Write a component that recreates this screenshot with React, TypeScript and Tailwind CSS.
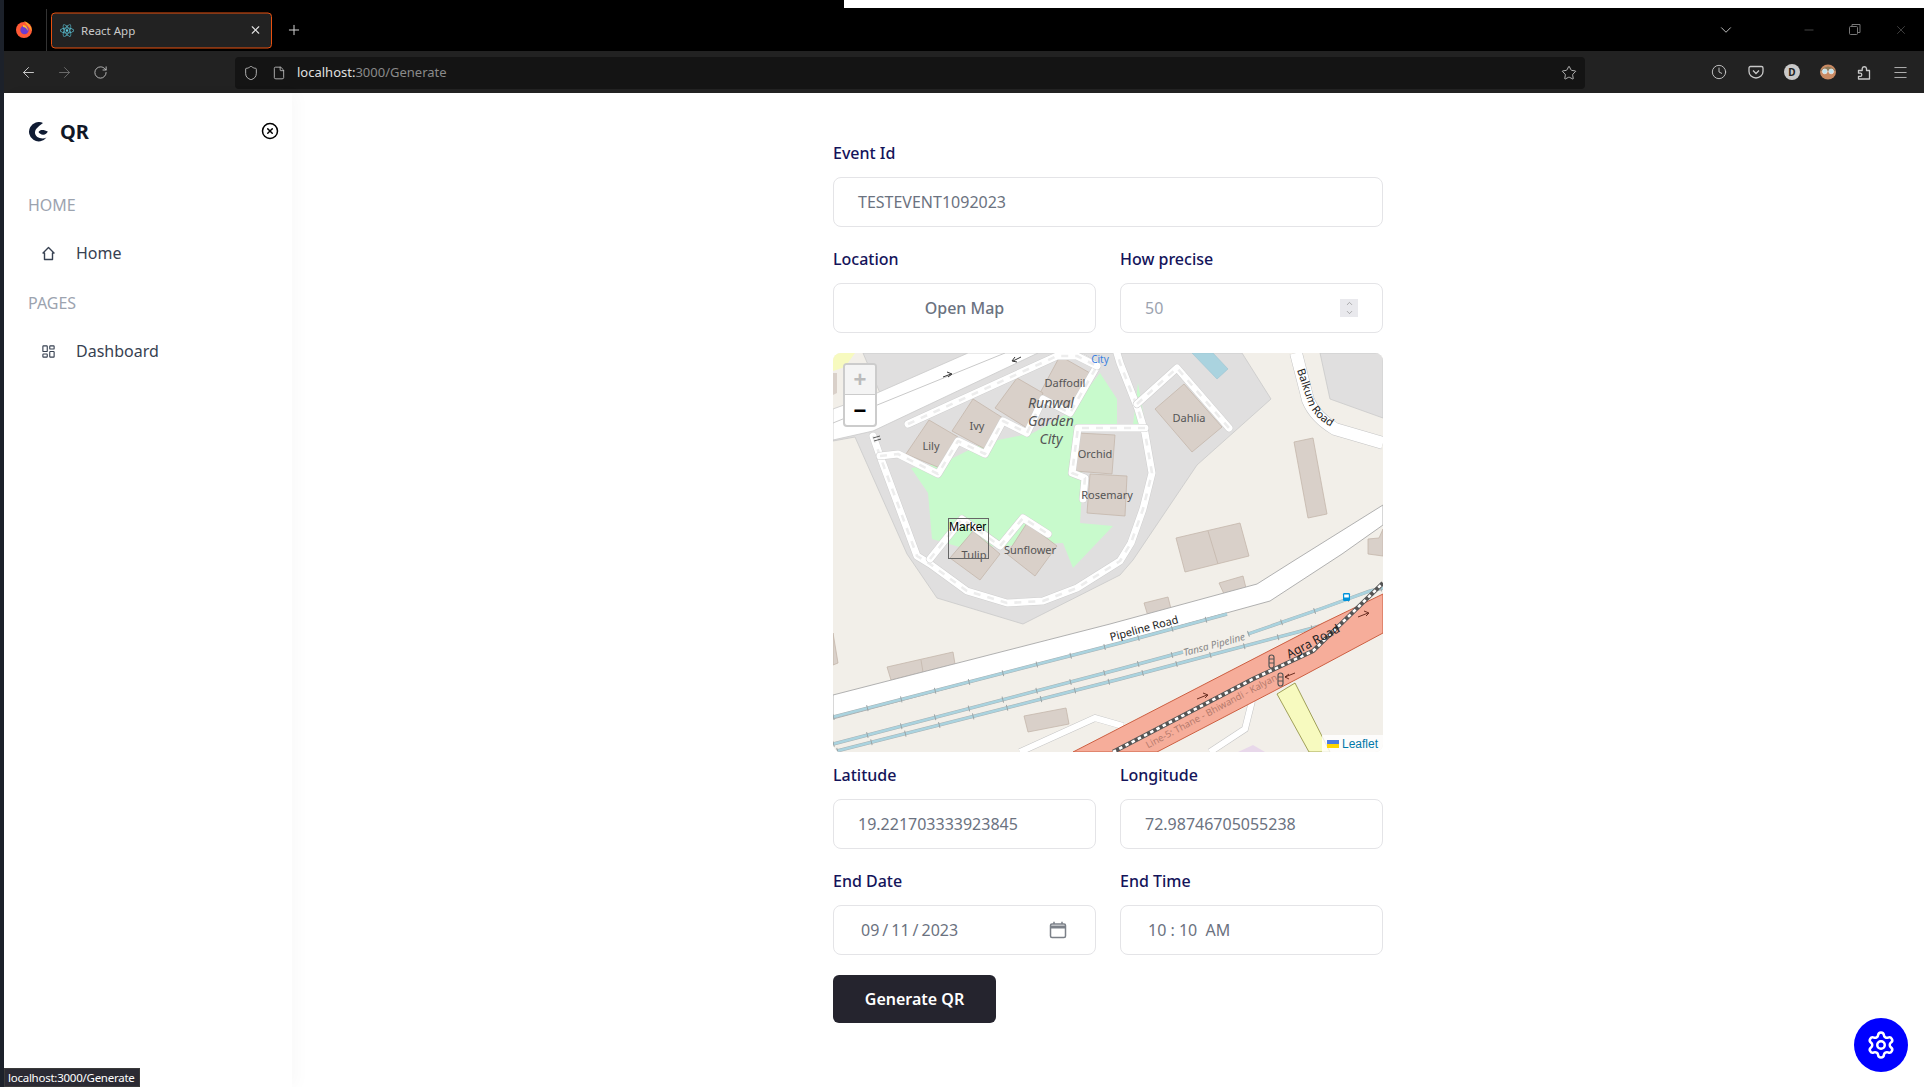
import React from "react";
import { FaReact } from "react-icons/fa";
import { ArrowLeft, ArrowRight, RotateCw, Shield, File, Star, Clock, Menu, X, Plus, ChevronDown, Minus, LayoutDashboard, Settings, CircleX, ChevronUp } from "lucide-react";

const font = { fontFamily: '"Noto Sans", sans-serif' };

function Field({ label, children, className = "" }: { label: string; children: React.ReactNode; className?: string }) {
  return (
    <div className={className}>
      <div className="text-[16px] leading-6 font-medium text-[#14145a] mb-3">{label}</div>
      {children}
    </div>
  );
}

function Box({ children, className = "" }: { children: React.ReactNode; className?: string }) {
  return (
    <div className={`h-[50px] rounded-lg border-[1.5px] border-[#e4e4e7] bg-white flex items-center text-[16px] text-[#6b7280] ${className}`}>
      {children}
    </div>
  );
}

function RoadDash({ d }: { d: string }) {
  return (
    <g fill="none" strokeLinejoin="round" strokeLinecap="round">
      <path d={d} stroke="#cfcfcf" strokeWidth={8} />
      <path d={d} stroke="#ffffff" strokeWidth={7} />
      <path d={d} stroke="#ededed" strokeWidth={2.6} strokeDasharray="7 7" strokeLinecap="butt" />
    </g>
  );
}

function Pipe({ d }: { d: string }) {
  return (
    <g fill="none">
      <path d={d} stroke="#a8b2b4" strokeWidth={3.4} />
      <path d={d} stroke="#aad3df" strokeWidth={2.4} />
      <path d={d} stroke="#9aa4a6" strokeWidth={6} strokeDasharray="1 34" />
    </g>
  );
}

function MapDrawing() {
  const bld = { fill: "#d9d0c9", stroke: "#c4b6ab", strokeWidth: 0.8 };
  const lbl = { fontFamily: '"Noto Sans", sans-serif', fontSize: 11, fill: "#555", textAnchor: "middle" as const };
  const arrow = { stroke: "#5a1f14", strokeWidth: 0.9, fill: "none" };
  return (
    <svg viewBox="0 0 550 399" width="550" height="399" className="block">
      <rect width="550" height="399" fill="#f2efe9" />
      <polygon points="8,0 22,0 12,14 0,18 0,0" fill="#f7fabf" />
      <polygon points="0,20 4,20 4,40 0,42" fill="#d9d0c9" />
      {/* residential */}
      <polygon points="22,84 74,201 104,245 190,271 287,222 300,207 364,112 438,46 409,0 30,0 47,40 0,60 0,88" fill="#e0dfdf" stroke="#c9c9c9" strokeWidth={0.8} />
      <polygon points="487,0 497,46 550,65 550,0" fill="#e0dfdf" stroke="#c9c9c9" strokeWidth={0.8} />
      <polygon points="78,115 95,140 99,186 130,195 230,190 240,215 280,173 247,170 250,125 240,72 284,71 284,46 267,20 235,60 200,80 150,90 110,110" fill="#c8facc" />
      <polygon points="305,30 312,70 300,72" fill="#c8facc" />
      <polygon points="359,0 380,0 395,16 384,26" fill="#aad3df" stroke="#9cc5d2" strokeWidth={0.6} />

      {/* top roads */}
      <polygon points="0,56 44,40 135,0 205,0 40,78 0,87" fill="#fff" stroke="#c9c9c9" strokeWidth={0.8} />
      <line x1="0" y1="70" x2="172" y2="0" stroke="#c9c9c9" strokeWidth={1} />

      {/* buildings */}
      <polygon points="227,3 257,20 237,61 207,40" {...bld} />
      <polygon points="184,25 210,40 194,75 162,55" {...bld} />
      <polygon points="140,46 170,65 152,96 119,78" {...bld} />
      <polygon points="96,67 125,84 107,115 73,101" {...bld} />
      <polygon points="245,80 282,82 279,121 242,118" {...bld} />
      <polygon points="257,121 294,123 292,163 254,160" {...bld} />
      <polygon points="351,31 389,74 359,99 322,56" {...bld} />
      <polygon points="461,89 480,85 494,161 475,165" {...bld} />
      <polygon points="343,185 407,170 416,203 352,219" {...bld} />
      <line x1="375" y1="178" x2="385" y2="211" stroke="#c4b6ab" strokeWidth={0.8} />
      <polygon points="386,230 410,223 413,235 391,241" {...bld} />
      <polygon points="311,250 335,244 338,256 315,263" {...bld} />
      <polygon points="550,176 546,185 535,186 535,201 550,203" {...bld} />
      <polygon points="54,314 120,299 122,311 58,327" {...bld} />
      <line x1="88" y1="307" x2="90" y2="319" stroke="#c4b6ab" strokeWidth={0.8} />
      <polygon points="191,363 233,355 236,371 195,379" {...bld} />
      <polygon points="0,280 5,310 0,312" {...bld} />
      <polygon points="194,170 224,193 202,223 174,201" {...bld} />
      <polygon points="140,178 167,201 147,227 117,205" {...bld} />

      {/* estate roads */}
      <RoadDash d="M40 83 L47 103 L84 203 L97 211 L134 238 L174 250 L210 248 L244 235 L287 208 L298 190 L310 156 L319 120 L312 80 L305 56 L287 10 L284 0" />
      <RoadDash d="M47 103 L65 101 L105 121 L125 88 L152 101 L170 68 L194 80 L210 46 L237 60 L264 13 L250 5" />
      <RoadDash d="M75 71 L224 3 L244 3 L264 13" />
      <RoadDash d="M312 75 L245 75 L239 120 L252 125 L250 146" />
      <RoadDash d="M97 206 L129 166 L167 193 L190 165 L215 181" />
      <RoadDash d="M304 51 L344 15 L396 75" />

      <path d="M110 24 L118 21 M114 19 L119 21 L115 24" stroke="#333" strokeWidth={1} fill="none" />
      <path d="M188 4 L180 8 M184 9 L179 8 L182 4" stroke="#333" strokeWidth={1} fill="none" />
      <path d="M40 85 L47 83 M41 88 L48 86" stroke="#333" strokeWidth={0.8} />

      {/* Balkum road */}
      <path d="M463 0 L475 47 Q482 64 502 76 L550 90" fill="none" stroke="#c4c4c4" strokeWidth={13} strokeLinejoin="round" />
      <path d="M463 0 L475 47 Q482 64 502 76 L550 90" fill="none" stroke="#fff" strokeWidth={12} strokeLinejoin="round" />

      {/* small lower roads */}
      <path d="M187 399 L262 365 L290 373" fill="none" stroke="#c4c4c4" strokeWidth={7} />
      <path d="M187 399 L262 365 L290 373" fill="none" stroke="#fff" strokeWidth={6} />
      <path d="M377 399 L412 376 L419 348" fill="none" stroke="#c4c4c4" strokeWidth={7} />
      <path d="M377 399 L412 376 L419 348" fill="none" stroke="#fff" strokeWidth={6} />
      <polygon points="405,399 420,392 432,399" fill="#e8d8ea" />

      {/* pipeline road */}
      <polygon points="0,342 277,271 424,231 462,207 550,152 550,172 509,201 437,248 277,292 0,366" fill="#fff" stroke="#a8a8a8" strokeWidth={0.9} />
      <Pipe d="M0 364 L287 290 L394 261" />
      <Pipe d="M0 391 L287 316 L350 299" />
      <Pipe d="M415 281 L490 255 L537 238 L550 235" />
      <Pipe d="M4 398 L287 326 L355 308 L480 275 L544 256 L550 254" />

      {/* yellow road */}
      <polygon points="444,341 462,330 497,399 476,399" fill="#f7fabf" stroke="#8a8a3a" strokeWidth={0.8} />

      {/* Agra road */}
      <polygon points="240,399 277,380 490,270 550,241 550,280 464,326 324,399" fill="#f6ad9a" stroke="#cc5f42" strokeWidth={1} />

      {/* railway */}
      <path d="M280 399 L420 326 L480 298 L550 230" fill="none" stroke="#555" strokeWidth={4.4} />
      <path d="M280 399 L420 326 L480 298 L550 230" fill="none" stroke="#fff" strokeWidth={2.6} strokeDasharray="3.5 3.5" />

      {/* arrows on agra road */}
      <path d="M364 346 L374 342 M370 340 L375 342 L372 345" {...arrow} />
      <path d="M462 320 L452 324 M456 321 L452 324 L456 326" {...arrow} />
      <path d="M525 264 L535 260 M531 258 L536 260 L533 263" {...arrow} />

      {/* traffic signals */}
      <rect x="436" y="302" width="5" height="13" rx="2.5" fill="#f6ad9a" stroke="#555" strokeWidth={1.2} />
      <rect x="445" y="320" width="5" height="13" rx="2.5" fill="#f6ad9a" stroke="#555" strokeWidth={1.2} />
      <path d="M436 306 H441 M436 310 H441 M445 324 H450 M445 328 H450" stroke="#555" strokeWidth={1} />

      {/* bus stop */}
      <rect x="510" y="240" width="7" height="8" rx="1.2" fill="#0092da" />
      <rect x="511.2" y="241.5" width="4.6" height="3" fill="#fff" />

      {/* labels */}
      <text x="267" y="10" fontSize="10" textAnchor="middle" fill="#3a7fe0" style={{ fontFamily: '"Noto Sans", sans-serif' }}>City</text>
      <text x="232" y="34" {...lbl}>Daffodil</text>
      <g style={{ fontFamily: '"Noto Sans", sans-serif', fontStyle: "italic" }} fontSize="14" fill="#555" textAnchor="middle">
        <text x="218" y="55">Runwal</text>
        <text x="218" y="73">Garden</text>
        <text x="218" y="91">City</text>
      </g>
      <text x="144" y="77" {...lbl}>Ivy</text>
      <text x="98" y="97" {...lbl}>Lily</text>
      <text x="262" y="105" {...lbl}>Orchid</text>
      <text x="274" y="146" {...lbl}>Rosemary</text>
      <text x="356" y="69" {...lbl}>Dahlia</text>
      <text x="141" y="206" {...lbl}>Tulip</text>
      <text x="197" y="201" {...lbl}>Sunflower</text>
      <path id="balkum" d="M464 17 L475 50 Q482 68 509 79" fill="none" />
      <text fontSize="11" fill="#222" style={{ fontFamily: '"Noto Sans", sans-serif' }}>
        <textPath href="#balkum">Balkum Road</textPath>
      </text>
      <text transform="translate(312 279) rotate(-15)" textAnchor="middle" fontSize="11" fill="#222" style={{ fontFamily: '"Noto Sans", sans-serif' }}>Pipeline Road</text>
      <text transform="translate(382 295) rotate(-15)" textAnchor="middle" fontSize="10" fill="#888" style={{ fontFamily: '"Noto Sans", sans-serif', fontStyle: "italic" }}>Tansa Pipeline</text>
      <text transform="translate(482 292) rotate(-28)" textAnchor="middle" fontSize="12" fill="#222" style={{ fontFamily: '"Noto Sans", sans-serif' }}>Agra Road</text>
      <text transform="translate(380 361) rotate(-28)" textAnchor="middle" fontSize="9.5" fill="#b57a6c" style={{ fontFamily: '"Noto Sans", sans-serif' }}>Line-5: Thane - Bhiwandi - Kalyan</text>
    </svg>
  );
}

function Logo() {
  return (
    <svg width="20" height="20" viewBox="0 0 20 20">
      <path d="M15 1 A9.7 9.7 0 1 0 18.5 15.5 C14 18 6.5 15.5 7 10 C7.5 6 11.5 4 15 1 Z" fill="#0f1b33" />
      <path d="M10.5 10 C12 7.2 16 7.4 19.8 9.6 C19 11.4 17 13 15 12.7 C13 12.5 11.3 11.5 10.5 10 Z" fill="#0f1b33" />
    </svg>
  );
}

function Firefox() {
  return (
    <svg width="18" height="18" viewBox="0 0 18 18">
      <circle cx="9" cy="10" r="8" fill="#ff5a36" />
      <path d="M9 1 C14 3 17 7 16.5 11 C15 8 13 6 9 1 Z" fill="#ffa62b" />
      <circle cx="9.5" cy="10" r="4.2" fill="#6a3bd1" />
      <path d="M8 5 C11 5 13.5 8 12.5 11 C12 8.5 10 7 8 7 Z" fill="#ffbd2e" />
    </svg>
  );
}

export default function App() {
  return (
    <div className="relative flex h-[1087px] w-[1924px] overflow-hidden bg-white" style={font}>
      <div className="w-1 shrink-0 bg-[#1c212a]" />
      <div className="flex min-w-0 flex-1 flex-col">
        {/* Tab strip */}
        <div className="relative flex h-[51px] shrink-0 items-center bg-black text-[#d6d6d6]">
          <div className="absolute right-0 top-0 h-2 w-[1080px] bg-white" />
          <div className="flex w-[42px] -translate-x-[1px] justify-center pt-[7px]"><Firefox /></div>
          <div className="mt-2 h-[42px] w-px bg-[#333]" />
          <div className="ml-1 flex h-[36px] w-[221px] translate-y-[4.5px] items-center rounded-[4px] border border-[#e8500f] bg-[#222222] px-2">
            <FaReact className="text-[#5cc8dc]" size={14} />
            <span className="ml-[7px] flex-1 text-[11.5px] text-[#c9c9c9]">React App</span>
            <X size={13} className="mr-[1px] text-[#e6e6e6]" />
          </div>
          <Plus size={16} className="ml-[14px] mt-[9px] text-[#d6d6d6]" strokeWidth={1.5} />
          <div className="flex-1" />
          <ChevronDown size={18} strokeWidth={1.2} className="mr-[67px] mt-2 text-[#d0d0d0]" />
          <Minus size={14} strokeWidth={1} className="mr-[33px] mt-2 text-[#777]" />
          <svg width="12" height="12" viewBox="0 0 12 12" className="mr-[33px] mt-2" fill="none" stroke="#777">
            <rect x="0.5" y="2.5" width="8" height="8" rx="1" />
            <path d="M3 2.5 V0.5 H11 V8.5 H8.5" />
          </svg>
          <X size={14} strokeWidth={0.9} className="mr-[16px] mt-2 text-[#777]" />
        </div>
        {/* Toolbar */}
        <div className="flex h-[42px] shrink-0 items-center bg-[#222222] text-[#c8c8c8]">
          <ArrowLeft size={17} strokeWidth={1.4} className="ml-[16px]" />
          <ArrowRight size={17} strokeWidth={1.4} className="ml-[19px] text-[#6a6a6a]" />
          <RotateCw size={15} strokeWidth={1.4} className="ml-[20px]" />
          <div className="ml-[127px] mt-[1px] flex h-[32px] w-[1350px] items-center rounded bg-[#141414]">
            <Shield size={16} strokeWidth={1.3} className="ml-[8px]" />
            <File size={14} strokeWidth={1.4} className="ml-[13px]" />
            <span className="ml-[11px] text-[13px]"><span className="text-[#e0e0e0]">localhost:</span><span className="text-[#8a8a8a]">3000/Generate</span></span>
            <div className="flex-1" />
            <Star size={16} strokeWidth={1.3} className="mr-[8px]" />
          </div>
          <Clock size={16} strokeWidth={1.4} className="ml-[126px]" />
          <svg width="16" height="16" viewBox="0 0 16 16" className="ml-[21px]" fill="none" stroke="#c8c8c8" strokeWidth="1.3">
            <path d="M2.5 2.5 H13.5 Q15 2.5 15 4 V7.5 A7 6.5 0 0 1 1 7.5 V4 Q1 2.5 2.5 2.5 Z" />
            <path d="M5 6.5 L8 9.5 L11 6.5" />
          </svg>
          <div className="ml-[20px] flex h-[16px] w-[16px] items-center justify-center rounded-full bg-[#c9c9c9] text-[10px] font-bold text-[#222]">D</div>
          <svg width="16" height="16" viewBox="0 0 16 16" className="ml-[20px]">
            <ellipse cx="8" cy="8" rx="8" ry="7.5" fill="#c98a63" />
            <path d="M1 6 Q8 -1 15 6 L15 7 L1 7 Z" fill="#8d7a5a" />
            <circle cx="4.8" cy="7.4" r="2.4" fill="#bfe3ee" stroke="#eee" strokeWidth="0.8" />
            <circle cx="11.2" cy="7.4" r="2.4" fill="#bfe3ee" stroke="#eee" strokeWidth="0.8" />
          </svg>
          <svg width="16" height="16" viewBox="0 0 16 16" className="ml-[20px]" fill="none" stroke="#c8c8c8" strokeWidth="1.3" strokeLinejoin="round">
            <path d="M2.5 15 H13.5 V6.5 H10.5 V4.5 A2.2 2.2 0 0 0 6.2 4.5 V6.5 H2.5 V9.2 H4.2 A1.6 1.6 0 0 1 4.2 12.4 H2.5 Z" />
          </svg>
          <Menu size={17} strokeWidth={1.2} className="ml-[20px]" />
        </div>
        {/* Page */}
        <div className="flex min-h-0 flex-1">
          <aside className="w-[288px] shrink-0 bg-white px-6 shadow-[6px_0_14px_rgba(0,0,0,0.025)]">
            <div className="flex items-center pt-[27px]">
              <Logo />
              <span className="ml-3 text-[20px] font-bold leading-6 text-[#111827]">QR</span>
              <div className="flex-1" />
              <CircleX size={18} strokeWidth={2} className="-mr-[11px] -translate-y-[1px] text-black" />
            </div>
            <div className="mt-[49px] text-[16px] leading-6 text-[#9ca3af]">HOME</div>
            <div className="mt-[24px] flex items-center text-[#374151]">
              <svg width="15" height="15" viewBox="0 0 15 15" className="ml-[13px]" fill="none" stroke="#374151" strokeWidth="1.4" strokeLinejoin="round">
                <path d="M7.5 1.5 L13 7 H11.5 V13.5 H3.5 V7 H2 Z" />
              </svg>
              <span className="ml-[20px] text-[16px] leading-6">Home</span>
            </div>
            <div className="mt-[26px] text-[16px] leading-6 text-[#9ca3af]">PAGES</div>
            <div className="mt-[24px] flex items-center text-[#374151]">
              <LayoutDashboard size={15} strokeWidth={1.8} className="ml-[13px]" />
              <span className="ml-[20px] text-[16px] leading-6">Dashboard</span>
            </div>
          </aside>
          <main className="flex min-w-0 flex-1 justify-center pt-[48px]">
            <div className="w-[550px]">
              <Field label="Event Id"><Box className="pl-[24px]">TESTEVENT1092023</Box></Field>
              <div className="mt-5 grid grid-cols-2 gap-6">
                <Field label="Location"><Box className="justify-center font-medium">Open Map</Box></Field>
                <Field label="How precise">
                  <Box className="pl-[24px] pr-[24px] justify-between">
                    <span className="text-[#9ca3af]">50</span>
                    <span className="flex h-[18px] w-[18px] flex-col items-center justify-center bg-[#e9e9ed] text-[#777]">
                      <ChevronUp size={9} strokeWidth={1.5} />
                      <ChevronDown size={9} strokeWidth={1.5} />
                    </span>
                  </Box>
                </Field>
              </div>
              <div className="relative mt-5 h-[399px] w-[550px] overflow-hidden rounded-lg">
                <MapDrawing />
                <div className="absolute left-[10px] top-[10px] w-[34px] overflow-hidden rounded border-2 border-[rgba(0,0,0,0.2)] bg-white" style={{ fontFamily: '"Liberation Sans", sans-serif' }}>
                  <div className="flex h-[30px] items-center justify-center border-b border-[#ccc] bg-[#f4f4f4] text-[22px] font-bold text-[#bbb]">+</div>
                  <div className="flex h-[30px] items-center justify-center text-[22px] font-bold text-black">−</div>
                </div>
                <div className="absolute left-[115px] top-[165px] h-[41px] w-[41px] border border-[#666] pt-[1px] text-[12px] leading-[14px] text-black" style={{ fontFamily: '"Liberation Sans", sans-serif' }}>Marker</div>
                <div className="absolute bottom-0 right-0 flex h-[17px] items-center bg-[rgba(255,255,255,0.8)] px-[5px] text-[12px] text-[#0078a8]" style={{ fontFamily: '"Liberation Sans", sans-serif' }}>
                  <svg width="12" height="8" viewBox="0 0 12 8" className="mr-[3px]"><rect width="12" height="4" fill="#4c7be1" /><rect y="4" width="12" height="4" fill="#ffd500" /></svg>
                  Leaflet
                </div>
              </div>
              <div className="mt-[11px] grid grid-cols-2 gap-x-6 gap-y-5">
                <Field label="Latitude"><Box className="pl-[24px]">19.221703333923845</Box></Field>
                <Field label="Longitude"><Box className="pl-[24px]">72.98746705055238</Box></Field>
                <Field label="End Date">
                  <Box className="pl-[27px] pr-[28px] justify-between">
                    <span>09<span className="mx-[3px]">/</span>11<span className="mx-[3px]">/</span>2023</span>
                    <svg width="18" height="18" viewBox="0 0 18 18" fill="none" stroke="#7b8088" strokeWidth="1.5">
                      <rect x="1.5" y="3" width="15" height="13.5" rx="1.5" />
                      <path d="M1.5 6 H16.5" strokeWidth="3" />
                      <path d="M5 0.8 V3 M13 0.8 V3" />
                    </svg>
                  </Box>
                </Field>
                <Field label="End Time">
                  <Box className="pl-[27px]"><span>10 : 10&nbsp;&nbsp;AM</span></Box>
                </Field>
              </div>
              <div className="mt-5 flex h-[48px] w-[163px] items-center justify-center rounded-md bg-[#25242e] text-[16px] font-semibold text-white">Generate QR</div>
            </div>
          </main>
        </div>
      </div>
      <div className="absolute bottom-0 left-1 flex h-[19px] w-[136px] items-center border border-[#3a3a3a] bg-[#2b2a33] pl-[3px] text-[11.5px] tracking-[-0.25px] text-white whitespace-nowrap">localhost:3000/Generate</div>
      <div className="absolute bottom-[15px] right-[16px] flex h-[54px] w-[54px] items-center justify-center rounded-full bg-[#0000ff]">
        <Settings size={30} strokeWidth={2} className="text-white" />
      </div>
    </div>
  );
}
